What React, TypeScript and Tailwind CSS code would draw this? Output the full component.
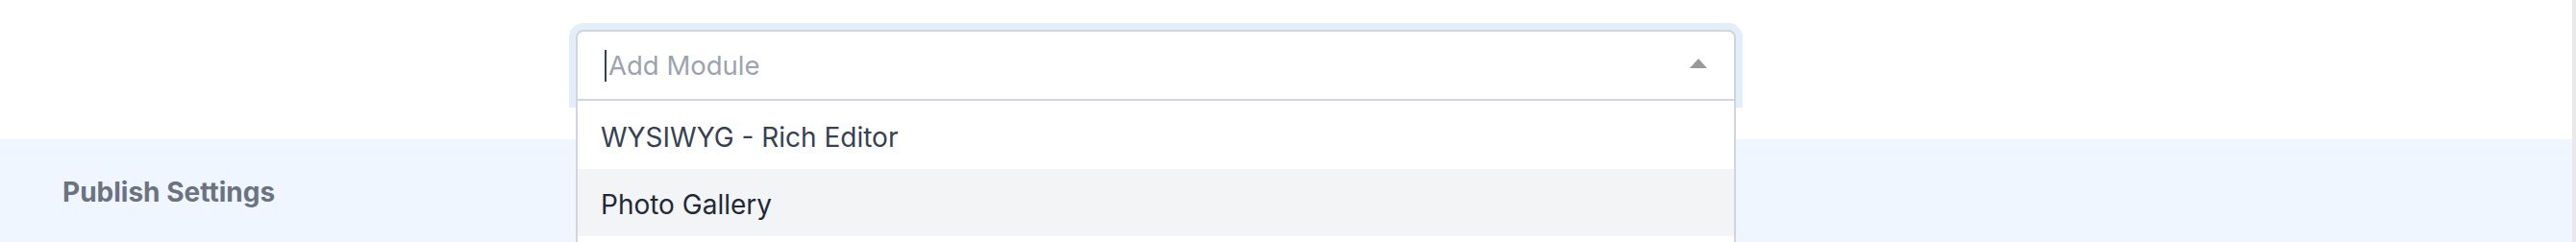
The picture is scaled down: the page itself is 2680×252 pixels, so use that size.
import React from 'react';

const options = ['WYSIWYG - Rich Editor', 'Photo Gallery'];

export default function App() {
  const highlighted = 1;

  return (
    <div
      className="flex h-[252px] w-[2680px] overflow-hidden bg-white"
      style={{ fontFamily: 'Inter, "Noto Sans", sans-serif' }}
    >
      <div className="flex flex-1 flex-col">
        <div className="h-[145px] shrink-0 pl-[599px] pt-[31px]">
          <div className="relative z-10 w-[1207px]">
            <div className="flex h-[74px] items-center rounded-t-[8px] border-2 border-[#d1d5db] bg-white pl-[28px] pr-[28px] shadow-[0_0_0_7px_#e2eefa]">
              <span className="h-[33px] w-[2px] bg-[#334155]" />
              <span className="ml-[2px] flex-1 text-[27.5px] leading-[40px] text-[#9ca3af]">Add Module</span>
              <svg width="18" height="10" viewBox="0 0 18 10" className="mb-[4px]">
                <polygon points="9,0 18,10 0,10" fill="#999999" />
              </svg>
            </div>
            <div className="absolute left-0 right-0 top-full border-x-2 border-[#d1d5db] bg-white">
              {options.map((opt, i) => (
                <div
                  key={opt}
                  className={`flex h-[70px] items-center px-[24px] pt-[3px] text-[28px] ${
                    i === 0 ? 'mt-[1px]' : ''
                  } ${i === highlighted ? 'bg-[#f3f4f6] text-[#1f2937]' : 'text-[#374151]'}`}
                >
                  {opt}
                </div>
              ))}
              <div className="h-[40px]" />
            </div>
          </div>
        </div>
        <div className="flex-1 bg-[#eff6ff] pl-[65px] pt-[35px]">
          <h3 className="text-[28px] font-bold leading-[40px] text-[#6b7280]">Publish Settings</h3>
        </div>
      </div>
      <div className="w-[4px] bg-[#e9e9e9]" />
    </div>
  );
}
